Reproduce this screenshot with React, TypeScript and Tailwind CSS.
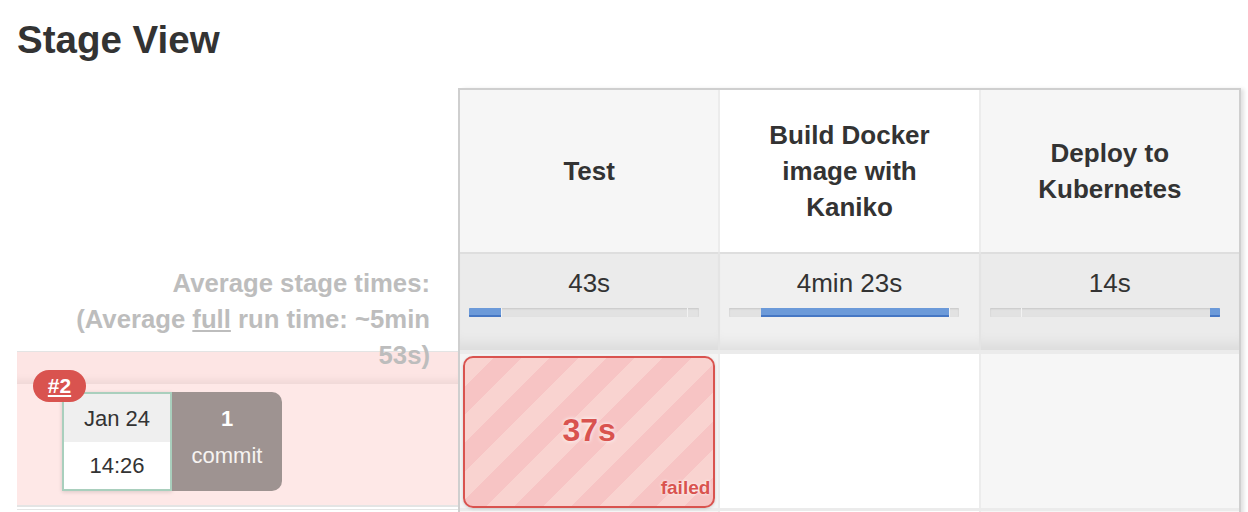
import React from "react";

type Seg = { w: number; blue?: boolean };

const stages: {
  name: string[];
  avg: string;
  segs: Seg[];
  odd: boolean;
}[] = [
  { name: ["Test"], avg: "43s", segs: [{ w: 32, blue: true }, { w: 186 }, { w: 12 }], odd: true },
  {
    name: ["Build Docker", "image with", "Kaniko"],
    avg: "4min 23s",
    segs: [{ w: 32 }, { w: 188, blue: true }, { w: 10 }],
    odd: false,
  },
  { name: ["Deploy to", "Kubernetes"], avg: "14s", segs: [{ w: 31 }, { w: 189 }, { w: 10, blue: true }], odd: true },
];

const ProgressBar = ({ segs }: { segs: Seg[] }) => (
  <div className="ml-[9px] mt-[7px] flex h-[9px] w-[230px] overflow-hidden rounded-[1px] bg-[#e2e2e2] shadow-[inset_0_1px_2px_rgba(0,0,0,0.12)]">
    {segs.map((s, i) =>
      s.blue ? (
        <div
          key={i}
          className="h-full shrink-0 border-b-2 border-[#4677c4] bg-[#6c9ad9]"
          style={{ width: s.w }}
        />
      ) : (
        <div
          key={i}
          className={
            "h-full shrink-0 " + (i > 0 ? "border-l border-[#f2f2f2]" : "")
          }
          style={{ width: s.w }}
        />
      )
    )}
  </div>
);

export default function App() {
  return (
    <div className="min-h-screen bg-white pl-[17px] pt-[17px] font-['Liberation_Sans',Arial,sans-serif] text-[#333]">
      <h1 className="text-[38.5px] font-bold leading-[46px] text-[#333]">Stage View</h1>

      <div className="mt-[25px] flex">
        {/* left column: averages + run rows */}
        <div className="w-[441px] shrink-0">
          <div className="h-[166px]" />
          <div className="relative z-10 h-[97px] pr-[28px] pt-[11px] text-right text-[25.7px] font-bold leading-[36px] text-[#bdbdbd]">
            <div>Average stage times:</div>
            <div>
              (Average <span className="underline">full</span> run time: ~5min
            </div>
            <div>53s)</div>
          </div>

          <div className="relative h-[156px] border-t border-b-2 border-[#e4e4e4] bg-[#fee8e7]">
            <div className="h-[32px] bg-[#fde5e4] shadow-[inset_0_-9px_8px_-6px_rgba(0,0,0,0.07)]" />
            <span className="absolute left-[16px] top-[18px] z-10 flex h-[32px] w-[53px] items-center justify-center rounded-full bg-[#d9534f] text-[21px] font-bold text-white underline">
              #2
            </span>
            <div className="flex pl-[45px] pt-[8px]">
              <div className="flex h-[99px] w-[110px] flex-col border-2 border-[#a9cfbd] bg-white shadow-[0_1px_4px_rgba(0,0,0,0.15)]">
                <div className="flex h-[48px] items-center justify-center bg-[#efefef] text-[22px] text-[#333]">
                  Jan 24
                </div>
                <div className="flex flex-1 items-center justify-center text-[22px] text-[#333]">
                  14:26
                </div>
              </div>
              <div className="flex h-[99px] w-[110px] flex-col items-center rounded-r-[10px] bg-[#9e9391] pt-[8px] text-[22px] leading-[37px] text-white">
                <span className="font-bold">1</span>
                <span className="text-[#f6f3f2]">commit</span>
              </div>
            </div>
          </div>
          <div className="mt-[2px] h-[40px] border-t border-[#e4e4e4]" />
        </div>

        {/* stage table */}
        <div className="w-[783px] shrink-0 border-l-2 border-r-2 border-t-2 border-[#cfcfcf] bg-[#ebebeb] shadow-[4px_0_4px_-1px_rgba(0,0,0,0.12)]">
          {/* headers */}
          <div className="grid grid-cols-3 gap-[2px] bg-[#ececec]">
            {stages.map((s) => (
              <div
                key={s.avg}
                className={
                  "flex h-[162px] flex-col items-center justify-center text-center text-[26px] font-bold leading-[36px] text-[#333] " +
                  (s.odd ? "bg-[#f6f6f6]" : "bg-white")
                }
              >
                {s.name.map((l) => (
                  <span key={l}>{l}</span>
                ))}
              </div>
            ))}
          </div>

          {/* averages */}
          <div className="grid grid-cols-3 gap-[2px] bg-[#e4e4e4]">
            {stages.map((s) => (
              <div
                key={s.avg}
                className={
                  "h-[98px] border-t-2 border-[#dedede] pt-[11px] shadow-[inset_0_-16px_14px_-10px_rgba(0,0,0,0.07)] " +
                  (s.odd ? "bg-[#ebebeb]" : "bg-[#f0f0f0]")
                }
              >
                <div className="text-center text-[26px] leading-[36px] text-[#333]">{s.avg}</div>
                <ProgressBar segs={s.segs} />
              </div>
            ))}
          </div>

          {/* run #2 */}
          <div className="mt-[4px] grid grid-cols-3 gap-[2px] bg-[#ececec]">
            <div className="h-[154px] bg-[#f4f4f4] px-[3px] pt-[2px]">
              <div className="relative flex h-[152px] items-center justify-center rounded-[10px] border-2 border-[#d9534f] bg-[repeating-linear-gradient(135deg,#f9d3d0_0px,#f9d3d0_20px,#f7c4c4_20px,#f7c4c4_40px)] pb-[4px] shadow-[0_1px_3px_rgba(0,0,0,0.15)]">
                <span className="text-[32px] font-bold text-[#d9534f] [text-shadow:0_0_4px_#fff]">37s</span>
                <span className="absolute bottom-[4px] right-[3px] text-[19px] font-bold text-[#d9534f] [text-shadow:0_0_3px_#fff]">
                  failed
                </span>
              </div>
            </div>
            <div className="h-[154px] bg-white" />
            <div className="h-[154px] bg-[#f6f6f6]" />
          </div>
          <div className="mt-[3px] grid h-[40px] grid-cols-3 gap-[2px] bg-[#ececec]">
            <div className="bg-[#f6f6f6]" />
            <div className="bg-white" />
            <div className="bg-[#f6f6f6]" />
          </div>
        </div>
      </div>
    </div>
  );
}
